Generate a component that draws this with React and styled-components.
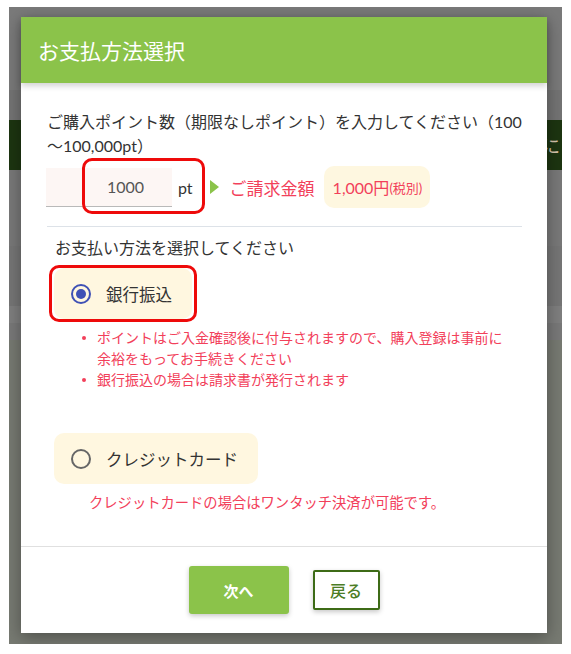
import React, { useState } from 'react';
import styled, { createGlobalStyle } from 'styled-components';

const GlobalStyle = createGlobalStyle`
    body {
        margin: 0;
        background: #fff;
        font-family: Lato, "Noto Sans CJK JP", "Noto Sans", sans-serif;
        color: #333;
    }
    * {
        box-sizing: border-box;
    }
`;

const Screen = styled.div`
    width: 571px;
    height: 654px;
    padding: 7px 9px 10px 9px;
`;

const Backdrop = styled.div`
    position: relative;
    height: 100%;
    overflow: hidden;
    background-color: #777a72;
`;

const BackPage = styled.div`
    display: flex;
    flex-direction: column;
`;

const Band = styled.div`
    height: ${(props) => props.$h}px;
    background-color: ${(props) => props.$bg};
    display: flex;
    align-items: center;
    justify-content: flex-end;
    padding-right: 2px;
    color: #d9c6ae;
    font-size: 18px;
`;

const Overlay = styled.div`
    position: absolute;
    inset: 0;
    padding: 10px 15px 11px 12px;
    display: flex;
`;

const Modal = styled.div`
    flex: 1;
    display: flex;
    flex-direction: column;
    background-color: #fff;
    box-shadow: 0 4px 16px rgba(0, 0, 0, 0.35);
`;

const Header = styled.div`
    position: relative;
    z-index: 1;
    height: 66px;
    display: flex;
    align-items: center;
    padding-left: 17px;
    background-color: #8bc34a;
    box-shadow: 0 3px 6px rgba(0, 0, 0, 0.18);
`;

const Title = styled.h2`
    margin: 0;
    font-size: 21px;
    font-weight: 400;
    color: #fff;
`;

const Body = styled.div`
    flex: 1;
    padding: 27px 25px 0 26px;
`;

const Intro = styled.p`
    margin: 0 -6px 0 0;
    font-size: 16px;
    line-height: 24px;
    color: #333;
`;

const AmountRow = styled.div`
    display: flex;
    align-items: center;
    margin-top: 8px;
`;

const InputGroup = styled.div`
    position: relative;
    display: flex;
    align-items: center;
`;

const AmountInput = styled.input`
    width: 126px;
    height: 39px;
    padding: 0 28px 0 0;
    margin-left: -1px;
    border: none;
    border-bottom: 1px solid #b9b9b9;
    background-color: #fdf6f4;
    text-align: right;
    font-family: inherit;
    font-size: 16px;
    color: #555;
    outline: none;
`;

const Unit = styled.span`
    margin-left: 6px;
    font-size: 16px;
    color: #333;
`;

const Annotation = styled.span`
    position: absolute;
    top: ${(props) => props.$top}px;
    right: ${(props) => props.$right}px;
    bottom: ${(props) => props.$bottom}px;
    left: ${(props) => props.$left}px;
    border: 3px solid #ee0a0a;
    border-radius: 10px;
    pointer-events: none;
`;

const Arrow = styled.span`
    width: 0;
    height: 0;
    margin-left: 17px;
    border-top: 7.5px solid transparent;
    border-bottom: 7.5px solid transparent;
    border-left: 9px solid #8bc34a;
`;

const BillingLabel = styled.span`
    margin-left: 11px;
    font-size: 17px;
    color: #f2405a;
`;

const PriceBadge = styled.span`
    margin-left: 9px;
    height: 42px;
    display: flex;
    align-items: center;
    padding: 0 8px 0 9px;
    border-radius: 10px;
    background-color: #fef7e0;
    color: #f2405a;
    font-size: 16px;
`;

const TaxNote = styled.small`
    font-size: 13px;
`;

const Divider = styled.hr`
    margin: 18px 0 0 0;
    border: none;
    border-top: 1px solid #dde2e8;
`;

const SectionLabel = styled.p`
    margin: 9px 0 0 0;
    padding-left: 8px;
    font-size: 16px;
    line-height: 24px;
    color: #333;
`;

const OptionWrap = styled.div`
    margin-top: ${(props) => props.$mt}px;
    margin-left: 7px;
`;

const Option = styled.label`
    position: relative;
    display: inline-flex;
    align-items: center;
    gap: 15px;
    height: 51px;
    padding: 0 20px 0 17px;
    border-radius: 10px;
    background-color: #fff7e0;
    font-size: 16.5px;
    color: #333;
    cursor: pointer;
`;

const Radio = styled.span`
    width: 20px;
    height: 20px;
    border-radius: 50%;
    border: 2px solid ${(props) => (props.$checked ? '#3f51b5' : '#666')};
    display: flex;
    align-items: center;
    justify-content: center;

    &::after {
        content: '';
        width: 10px;
        height: 10px;
        border-radius: 50%;
        background-color: ${(props) => (props.$checked ? '#3f51b5' : 'transparent')};
    }
`;

const NoteList = styled.ul`
    margin: 8px 0 0 0;
    padding: 0 18px 0 50px;
    list-style: none;
`;

const NoteItem = styled.li`
    position: relative;
    font-size: 14px;
    line-height: 21px;
    color: #f2405a;

    &::before {
        content: '';
        position: absolute;
        left: -15px;
        top: 9px;
        width: 4px;
        height: 4px;
        border-radius: 50%;
        background-color: #f2405a;
    }
`;

const CardNote = styled.p`
    margin: 8px 0 0 0;
    padding-left: 42px;
    font-size: 14.3px;
    line-height: 21px;
    color: #f2405a;
`;

const Footer = styled.div`
    height: 87px;
    border-top: 1px solid #e0e0e0;
    display: flex;
    align-items: center;
    justify-content: center;
    gap: 24px;
`;

const NextButton = styled.button`
    width: 100px;
    height: 48px;
    border: none;
    border-radius: 3px;
    background-color: #8bc34a;
    color: #fff;
    font-family: inherit;
    font-size: 15px;
    font-weight: 700;
    box-shadow: 0 2px 5px rgba(0, 0, 0, 0.22);
    cursor: pointer;
`;

const BackButton = styled.button`
    width: 67px;
    height: 40px;
    border: 2px solid #3d6b17;
    border-radius: 2px;
    background-color: #fff;
    color: #4c7d26;
    font-family: inherit;
    font-size: 16px;
    font-weight: 500;
    box-shadow: 0 2px 5px rgba(0, 0, 0, 0.22);
    cursor: pointer;
`;

const bands = [
    { h: 83, bg: '#7a7a7a' },
    { h: 30, bg: '#747474' },
    { h: 50, bg: '#1d3511', text: 'に' },
    { h: 76, bg: '#797979' },
    { h: 60, bg: '#767676' },
    { h: 17, bg: '#7f7f7f' },
    { h: 17, bg: '#797979' },
];

const PaymentDialog = () => {
    const [points, setPoints] = useState('1000');
    const [method, setMethod] = useState('bank');

    return (
        <Modal>
            <Header>
                <Title>お支払方法選択</Title>
            </Header>
            <Body>
                <Intro>ご購入ポイント数（期限なしポイント）を入力してください（100～100,000pt）</Intro>
                <AmountRow>
                    <InputGroup>
                        <AmountInput value={points} onChange={(e) => setPoints(e.target.value)} />
                        <Unit>pt</Unit>
                        <Annotation $top={-10} $right={-12} $bottom={-7} $left={35} />
                    </InputGroup>
                    <Arrow />
                    <BillingLabel>ご請求金額</BillingLabel>
                    <PriceBadge>
                        1,000円<TaxNote>(税別)</TaxNote>
                    </PriceBadge>
                </AmountRow>
                <Divider />
                <SectionLabel>お支払い方法を選択してください</SectionLabel>
                <OptionWrap $mt={8}>
                    <Option onClick={() => setMethod('bank')}>
                        <Radio $checked={method === 'bank'} />
                        銀行振込
                        <Annotation $top={-3} $right={-5} $bottom={-3} $left={-5} />
                    </Option>
                </OptionWrap>
                <NoteList>
                    <NoteItem>ポイントはご入金確認後に付与されますので、購入登録は事前に余裕をもってお手続きください</NoteItem>
                    <NoteItem>銀行振込の場合は請求書が発行されます</NoteItem>
                </NoteList>
                <OptionWrap $mt={43}>
                    <Option onClick={() => setMethod('card')}>
                        <Radio $checked={method === 'card'} />
                        クレジットカード
                    </Option>
                </OptionWrap>
                <CardNote>クレジットカードの場合はワンタッチ決済が可能です。</CardNote>
            </Body>
            <Footer>
                <NextButton>次へ</NextButton>
                <BackButton>戻る</BackButton>
            </Footer>
        </Modal>
    );
};

const App = () => (
    <>
        <GlobalStyle />
        <Screen>
            <Backdrop>
                <BackPage>
                    {bands.map((band, i) => (
                        <Band key={i} $h={band.h} $bg={band.bg}>
                            {band.text}
                        </Band>
                    ))}
                </BackPage>
                <Overlay>
                    <PaymentDialog />
                </Overlay>
            </Backdrop>
        </Screen>
    </>
);

export default App;
